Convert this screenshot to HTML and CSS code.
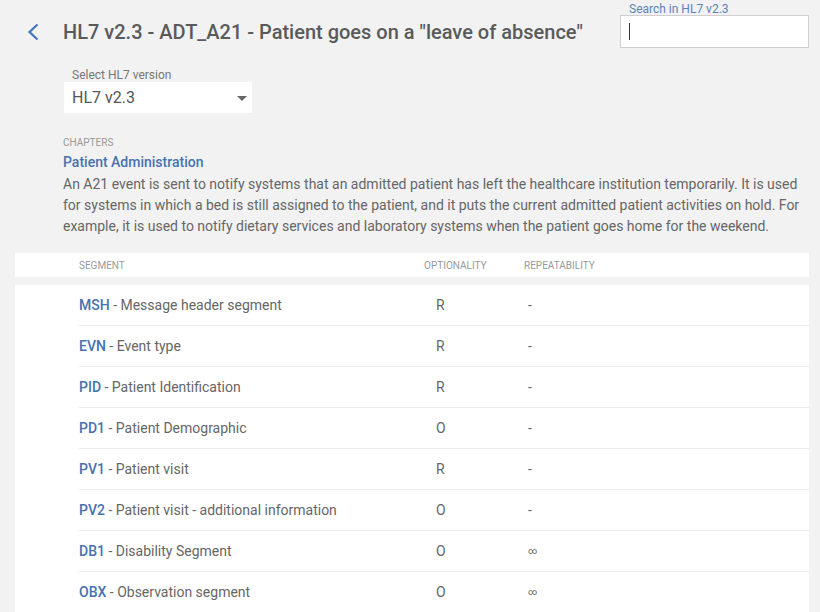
FILE: index.html
```html
<!DOCTYPE html>
<html lang="en">
<head>
<meta charset="utf-8">
<title>HL7 v2.3 - ADT_A21</title>
<link rel="stylesheet" href="styles.css">
</head>
<body>
<header class="top">
  <div class="title-wrap">
    <a class="back" href="#" aria-label="Back">
      <svg width="14" height="18" viewBox="0 0 14 18"><path d="M11.5 1.5 L3.5 9 L11.5 16.5" fill="none" stroke="#3f75c0" stroke-width="2.2"/></svg>
    </a>
    <h1 class="title">HL7 v2.3 - ADT_A21 - Patient goes on a "leave of absence"</h1>
  </div>
  <div class="search">
    <label class="search-label">Search in HL7 v2.3</label>
    <div class="search-box"><span class="caret"></span></div>
  </div>
</header>

<section class="version">
  <div class="version-label">Select HL7 version</div>
  <div class="select">
    <span>HL7 v2.3</span>
    <span class="arrow"></span>
  </div>
</section>

<section class="chapter">
  <div class="chapters-label">CHAPTERS</div>
  <div class="chapter-name">Patient Administration</div>
  <p class="desc">An A21 event is sent to notify systems that an admitted patient has left the healthcare institution temporarily. It is used for systems in which a bed is still assigned to the patient, and it puts the current admitted patient activities on hold. For example, it is used to notify dietary services and laboratory systems when the patient goes home for the weekend.</p>
</section>

<div class="thead">
  <div class="row-grid head">
    <span>SEGMENT</span>
    <span>OPTIONALITY</span>
    <span>REPEATABILITY</span>
  </div>
</div>

<div class="tbody">
  <div class="row-grid row"><span class="seg"><b>MSH</b> - Message header segment</span><span class="opt">R</span><span class="rep">-</span></div>
  <div class="row-grid row"><span class="seg"><b>EVN</b> - Event type</span><span class="opt">R</span><span class="rep">-</span></div>
  <div class="row-grid row"><span class="seg"><b>PID</b> - Patient Identification</span><span class="opt">R</span><span class="rep">-</span></div>
  <div class="row-grid row"><span class="seg"><b>PD1</b> - Patient Demographic</span><span class="opt">O</span><span class="rep">-</span></div>
  <div class="row-grid row"><span class="seg"><b>PV1</b> - Patient visit</span><span class="opt">R</span><span class="rep">-</span></div>
  <div class="row-grid row"><span class="seg"><b>PV2</b> - Patient visit - additional information</span><span class="opt">O</span><span class="rep">-</span></div>
  <div class="row-grid row"><span class="seg"><b>DB1</b> - Disability Segment</span><span class="opt">O</span><span class="rep inf">∞</span></div>
  <div class="row-grid row"><span class="seg"><b>OBX</b> - Observation segment</span><span class="opt">O</span><span class="rep inf">∞</span></div>
</div>
</body>
</html>
```

FILE: styles.css
```css
* { box-sizing: border-box; }
html, body { margin: 0; padding: 0; }
body {
  background: #f2f2f2;
  font-family: Roboto, "Liberation Sans", Arial, sans-serif;
  color: #666;
  width: 820px;
  overflow: hidden;
}

.top {
  display: flex;
  align-items: flex-start;
  height: 69px;
}
.title-wrap {
  display: flex;
  align-items: center;
  margin-top: 20px;
  height: 24px;
}
.back {
  display: flex;
  width: 14px;
  height: 18px;
  margin-left: 26px;
  margin-right: 23px;
}
.title {
  margin: 0;
  font-size: 20px;
  line-height: 24px;
  font-weight: 500;
  color: #5a5a5a;
  white-space: nowrap;
}
.search {
  margin-left: auto;
  margin-right: 11px;
  margin-top: 3px;
  width: 189px;
}
.search-label {
  display: block;
  font-size: 12px;
  line-height: 12px;
  color: #5b82bd;
  padding-left: 9px;
}
.search-box {
  height: 33px;
  background: #fff;
  border: 1px solid #cfcfcf;
  display: flex;
  align-items: center;
  padding-left: 8px;
}
.caret {
  width: 1px;
  height: 17px;
  background: #333;
}

.version {
  padding-left: 64px;
}
.version-label {
  font-size: 12px;
  line-height: 13px;
  color: #777;
  padding-left: 8px;
}
.select {
  width: 188px;
  height: 31px;
  background: #fff;
  display: flex;
  align-items: center;
  justify-content: space-between;
  padding: 0 5px 0 8px;
  font-size: 16px;
  color: #555;
}
.arrow {
  width: 0;
  height: 0;
  border-left: 5px solid transparent;
  border-right: 5px solid transparent;
  border-top: 5px solid #666;
  margin-top: 1px;
}

.chapter {
  padding: 24px 12px 0 63px;
}
.chapters-label {
  font-size: 10px;
  line-height: 12px;
  color: #999;
}
.chapter-name {
  margin-top: 5px;
  font-size: 14px;
  line-height: 17px;
  font-weight: 500;
  color: #4672b0;
}
.desc {
  margin: 3px 0 0;
  font-size: 14px;
  line-height: 21px;
  color: #666;
}

.thead {
  margin: 16px 11px 0 15px;
  background: #fff;
  height: 24px;
}
.row-grid {
  display: grid;
  grid-template-columns: 345px 100px 1fr;
  margin-left: 64px;
  align-items: center;
}
.head {
  height: 24px;
  font-size: 10px;
  color: #999;
}
.tbody {
  margin: 8px 11px 0 15px;
  background: #fff;
  min-height: 340px;
}
.row {
  height: 41px;
  border-bottom: 1px solid #ececec;
  font-size: 14px;
  padding-bottom: 1px;
}
.seg { color: #666; }
.seg b {
  font-weight: 500;
  color: #4672b0;
}
.opt { padding-left: 12px; color: #666; }
.rep { padding-left: 4px; color: #666; }
.rep.inf { font-size: 9px; }
```
